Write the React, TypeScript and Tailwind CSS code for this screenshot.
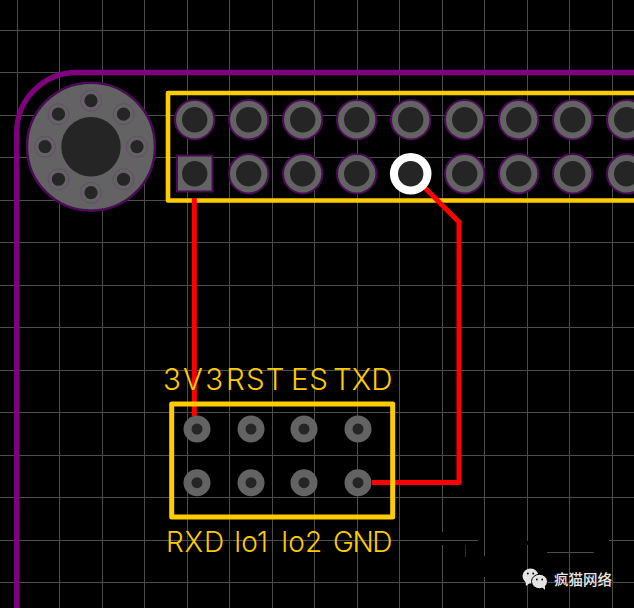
const GRID_X = [17, 59, 102, 144, 187, 229, 272, 314, 357, 399, 442, 484, 527, 569, 612];
const GRID_Y = [30, 72, 115, 157, 200, 242, 285, 327, 370, 412, 455, 497, 582];
const HEADER_X = [195, 249, 303, 357, 411, 465, 519, 573, 627];
const SMALL_X = [197, 251, 304, 358];
const RING = [0, 45, 90, 135, 180, 225, 270, 315];

// grid lines wiped out by the watermark area
const GAPS: Record<number, [number, number]> = {
  442: [532, 545],
  484: [556, 577],
  527: [541, 545],
};

function Grid() {
  return (
    <g stroke="#4c4c4c" strokeWidth="1">
      {GRID_X.map((x) => {
        const gap = GAPS[x];
        return gap ? (
          <g key={x}>
            <line x1={x + 0.5} y1="0" x2={x + 0.5} y2={gap[0]} />
            <line x1={x + 0.5} y1={gap[1]} x2={x + 0.5} y2="608" />
          </g>
        ) : (
          <line key={x} x1={x + 0.5} y1="0" x2={x + 0.5} y2="608" />
        );
      })}
      {GRID_Y.map((y) => (
        <line key={y} x1="0" y1={y + 0.5} x2="634" y2={y + 0.5} />
      ))}
      <line x1="0" y1="540.5" x2="478" y2="540.5" />
      <line x1="609" y1="540.5" x2="634" y2="540.5" />
      <line x1="547" y1="552.5" x2="594" y2="552.5" />
      <line x1="465.5" y1="545" x2="465.5" y2="557" stroke="#2a2a2a" />
    </g>
  );
}

function MountingHole() {
  return (
    <g>
      <circle cx="91" cy="146.7" r="64" fill="#636363" stroke="#4a0a55" strokeWidth="2.5" />
      {RING.map((deg) => {
        const a = (deg * Math.PI) / 180;
        const cx = 91 + 46 * Math.cos(a);
        const cy = 146.7 + 46 * Math.sin(a);
        return (
          <g key={deg}>
            <circle cx={cx} cy={cy} r="10.5" fill="none" stroke="#6a3a75" strokeWidth="0.6" />
            <circle cx={cx} cy={cy} r="6.6" fill="#252525" />
          </g>
        );
      })}
      <circle cx="91" cy="146.7" r="29.7" fill="#252525" />
    </g>
  );
}

function Traces() {
  return (
    <g fill="none" stroke="#ff0000" strokeWidth="5" strokeLinejoin="round">
      <path d="M194.3 198V416" />
      <path d="M372 482.5H459V222L424 187" />
    </g>
  );
}

function HeaderPads() {
  return (
    <g>
      {HEADER_X.map((x) => (
        <g key={x}>
          <circle cx={x - 0.3} cy="119.7" r="19.7" fill="#636363" stroke="#4a0a55" strokeWidth="2" />
          <circle cx={x - 0.3} cy="119.7" r="12.7" fill="#252525" />
          {x === 195 ? (
            <rect x="177" y="155.5" width="35.5" height="36" fill="#636363" stroke="#4a0a55" strokeWidth="2" />
          ) : x === 411 ? (
            <circle cx={x - 0.3} cy="173.7" r="20.8" fill="#fff" />
          ) : (
            <circle cx={x - 0.3} cy="173.7" r="19.7" fill="#636363" stroke="#4a0a55" strokeWidth="2" />
          )}
          <circle cx={x - 0.3} cy="173.7" r="12.7" fill="#252525" />
        </g>
      ))}
    </g>
  );
}

function SmallPads() {
  return (
    <g>
      {SMALL_X.map((x) =>
        [429, 482.7].map((y) => (
          <g key={`${x}-${y}`}>
            <circle cx={x} cy={y} r="13.5" fill="#636363" />
            <circle cx={x} cy={y} r="5.5" fill="#252525" />
          </g>
        )),
      )}
    </g>
  );
}

function WechatIcon() {
  return (
    <svg className="absolute left-[522px] top-[568px]" width="27" height="23" viewBox="0 0 27 23">
      <ellipse cx="8.5" cy="8" rx="8" ry="7.5" fill="#e4e4e4" />
      <path d="M3.5 13L4 18L8.5 14.5Z" fill="#e4e4e4" />
      <circle cx="5.8" cy="5.5" r="1" fill="#000" />
      <circle cx="11.2" cy="5.5" r="1" fill="#000" />
      <ellipse cx="17.5" cy="13.5" rx="8" ry="7.2" fill="#e4e4e4" stroke="#000" strokeWidth="1" />
      <path d="M20 19L23 22L23 18Z" fill="#e4e4e4" />
      <circle cx="14.8" cy="11.5" r="0.9" fill="#000" />
      <circle cx="20.2" cy="11.5" r="0.9" fill="#000" />
    </svg>
  );
}

export default function App() {
  return (
    <div className="relative h-[608px] w-[634px] overflow-hidden bg-black">
      <svg className="absolute inset-0" width="634" height="608" viewBox="0 0 634 608">
        <Grid />
        <path d="M16.7 608V132A60 60 0 0 1 76.7 72.5H634" fill="none" stroke="#800080" strokeWidth="5.3" />
        <MountingHole />
        <path d="M634 93H168V200.5H634" fill="none" stroke="#ffcc00" strokeWidth="4.6" strokeLinejoin="round" />
        <Traces />
        <HeaderPads />
        <rect x="171.7" y="404" width="221" height="113" fill="none" stroke="#ffcc00" strokeWidth="5" strokeLinejoin="round" />
        <SmallPads />
      </svg>

      <div className="absolute left-[163px] top-[361px] flex whitespace-nowrap font-['Inter',sans-serif] text-[29.5px] font-light leading-[36px] text-[#ffcc00]">
        <span className="w-[63px] tracking-[2.2px]">3V3</span>
        <span className="w-[65px] tracking-[1.2px]">RST</span>
        <span className="w-[42px] tracking-[0.8px]">ES</span>
        <span>TXD</span>
      </div>
      <div className="absolute left-[166px] top-[524px] flex whitespace-nowrap font-['Inter',sans-serif] text-[28px] font-light leading-[36px] text-[#ffcc00]">
        <span className="w-[68px] tracking-[0.8px]">RXD</span>
        <span className="w-[47px]">Io1</span>
        <span className="w-[52px]">Io2</span>
        <span className="tracking-[-1.4px]">GND</span>
      </div>

      <WechatIcon />
      <div className="absolute left-[554px] top-[569px] whitespace-nowrap font-['Noto_Sans_CJK_SC',sans-serif] text-[14.5px] font-medium leading-[20px] text-[#e6e6e6]">
        疯猫网络
      </div>
    </div>
  );
}
